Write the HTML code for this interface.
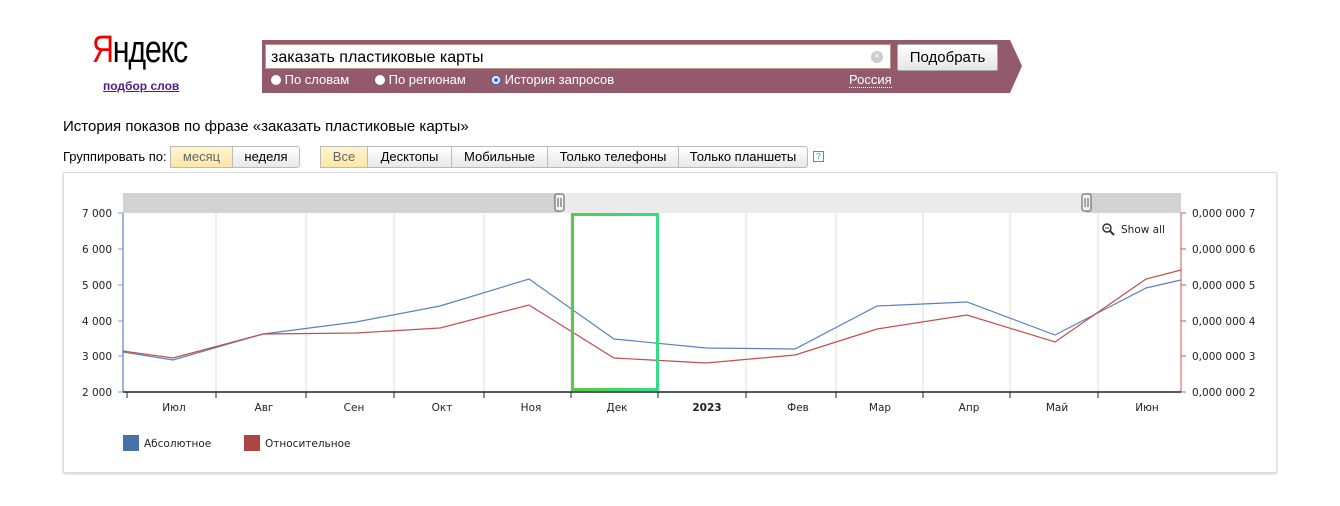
<!DOCTYPE html>
<html><head><meta charset="utf-8"><style>
body{margin:0;width:1340px;height:506px;background:#fff;font-family:"Liberation Sans",sans-serif;position:relative;overflow:hidden;color:#000}
.a{position:absolute}
.btn{position:absolute;top:146px;height:20px;border:1px solid #bbb;background:linear-gradient(#fff,#e8e8e8);font-size:13px;line-height:20px;text-align:center;box-sizing:content-box}
.on{background:linear-gradient(#fff5d0,#fbe7a6);color:#666}
.t{font-family:"DejaVu Sans",sans-serif;font-size:10.5px;fill:#222}
</style></head><body>
<div class="a" style="left:92px;top:28px;font-size:38px;letter-spacing:-1.5px;transform:scaleX(0.8);transform-origin:left;line-height:44px"><span style="color:#e00">Я</span>ндекс</div>
<div class="a" style="left:103px;top:79px;font-size:12px;font-weight:bold;color:#551a8b;text-decoration:underline">подбор слов</div>
<svg class="a" style="left:262px;top:40px" width="762" height="53"><polygon points="0,0 748,0 760,26 748,53 0,53" fill="#935a6e"/></svg>
<div class="a" style="left:265px;top:44px;height:25px;background:#fff;border:1px solid #b98;font-size:16px;line-height:25px;padding-left:5px;box-sizing:border-box;width:626px">заказать пластиковые карты</div>
<div class="a" style="left:871px;top:51px;width:12px;height:12px;border-radius:50%;background:#ccc;color:#fff;font-size:10px;line-height:12px;text-align:center">×</div>
<div class="a" style="left:897px;top:44px;width:99px;height:25px;border:1px solid #aaa;background:linear-gradient(#fff,#e6e6e6);font-size:15px;line-height:25px;text-align:center;border-radius:2px">Подобрать</div>
<div class="a" style="left:271px;top:73px;font-size:13px;color:#fff;line-height:14px">
<span style="display:inline-block;width:10px;height:10px;border-radius:50%;background:#fff;vertical-align:-1px"></span> По словам</div>
<div class="a" style="left:375px;top:73px;font-size:13px;color:#fff;line-height:14px">
<span style="display:inline-block;width:10px;height:10px;border-radius:50%;background:#fff;vertical-align:-1px"></span> По регионам</div>
<div class="a" style="left:491px;top:73px;font-size:13px;color:#fff;line-height:14px">
<span style="display:inline-block;width:8px;height:8px;border-radius:50%;background:#fff;border:1px solid #2a6ee0;box-shadow:inset 0 0 0 2px #fff,inset 0 0 0 4px #2a6ee0;vertical-align:-1px"></span> История запросов</div>
<div class="a" style="left:849px;top:73px;font-size:13px;color:#fff;line-height:14px;border-bottom:1px dotted #fff">Россия</div>
<div class="a" style="left:63px;top:118px;font-size:15px">История показов по фразе «заказать пластиковые карты»</div>
<div class="a" style="left:63px;top:149px;font-size:13px">Группировать по:</div>
<div class="btn on" style="left:170px;width:61px">месяц</div>
<div class="btn" style="left:232px;width:66px;border-radius:0 3px 3px 0">неделя</div>
<div class="btn on" style="left:320px;width:46px">Все</div>
<div class="btn" style="left:367px;width:83px">Десктопы</div>
<div class="btn" style="left:451px;width:95px">Мобильные</div>
<div class="btn" style="left:547px;width:130px">Только телефоны</div>
<div class="btn" style="left:678px;width:128px;border-radius:0 3px 3px 0">Только планшеты</div>
<div class="a" style="left:813px;top:151px;width:9px;height:9px;border:1px solid #4a4;font-size:8px;line-height:9px;text-align:center;color:#4a4">?</div>
<div class="a" style="left:63px;top:172px;width:1212px;height:299px;border:1px solid #ddd;box-shadow:0 1px 2px #ccc"></div>
<svg class="a" style="left:0;top:0" width="1340" height="506">
<rect x="123" y="193" width="437" height="20" fill="#d2d2d2"/>
<rect x="560" y="193" width="526" height="20" fill="#ebebeb"/>
<rect x="1086" y="193" width="95" height="20" fill="#d2d2d2"/>
<rect x="555" y="194" width="9" height="17" rx="2" fill="#f4f4f4" stroke="#555"/><path d="M558 198v9M561 198v9" stroke="#555"/>
<rect x="1082" y="194" width="9" height="17" rx="2" fill="#f4f4f4" stroke="#555"/><path d="M1085 198v9M1088 198v9" stroke="#555"/>
<g stroke="#ddd"><path d="M216 213V392M306 213V392M394 213V392M484 213V392M571 213V392M658 213V392M746 213V392M836 213V392M923 213V392M1010 213V392M1098 213V392"/></g>
<path d="M123 213V392" stroke="#7a9ccc" stroke-width="1.5"/>
<path d="M1181 213V392" stroke="#c55" stroke-width="1"/>
<g stroke="#7a9ccc"><path d="M118 213h5M118 249h5M118 285h5M118 321h5M118 356h5M118 392h5"/></g>
<g stroke="#c55"><path d="M1181 213h5M1181 249h5M1181 285h5M1181 321h5M1181 356h5M1181 392h5"/></g>
<path d="M123 392H1181" stroke="#222" stroke-width="1.5"/>
<g stroke="#222"><path d="M127 392v6M216 392v6M306 392v6M394 392v6M484 392v6M571 392v6M658 392v6M746 392v6M836 392v6M923 392v6M1010 392v6M1098 392v6"/></g>
<g class="t" text-anchor="end"><text x="112" y="217">7 000</text><text x="112" y="253">6 000</text><text x="112" y="289">5 000</text><text x="112" y="325">4 000</text><text x="112" y="360">3 000</text><text x="112" y="396">2 000</text></g>
<g class="t"><text x="1192" y="217">0,000 000 7</text><text x="1192" y="253">0,000 000 6</text><text x="1192" y="289">0,000 000 5</text><text x="1192" y="325">0,000 000 4</text><text x="1192" y="360">0,000 000 3</text><text x="1192" y="396">0,000 000 2</text></g>
<g class="t" text-anchor="middle"><text x="174" y="411">Июл</text><text x="264" y="411">Авг</text><text x="354" y="411">Сен</text><text x="442" y="411">Окт</text><text x="531" y="411">Ноя</text><text x="617" y="411">Дек</text><text x="707" y="411" font-weight="bold">2023</text><text x="798" y="411">Фев</text><text x="880" y="411">Мар</text><text x="969" y="411">Апр</text><text x="1057" y="411">Май</text><text x="1147" y="411">Июн</text></g>
<polyline fill="none" stroke="#5b82bd" stroke-width="1.2" points="123,352 173,360 263,334 356,322 440,306 529,279 614,339 706,348 795,349 877,306 967,302 1055,335 1146,288 1181,280"/>
<polyline fill="none" stroke="#c0504d" stroke-width="1.2" points="123,351 173,358 263,334 356,333 440,328 529,305 614,358 706,363 795,355 877,329 967,315 1055,342 1146,279 1181,270"/>
<defs><linearGradient id="g" x1="0" x2="1"><stop offset="0" stop-color="#5c4"/><stop offset="1" stop-color="#3d8"/></linearGradient></defs>
<rect x="572.5" y="214.5" width="85" height="175" fill="none" stroke="url(#g)" stroke-width="3"/>
<circle cx="1107" cy="228" r="4" fill="none" stroke="#333" stroke-width="1.5"/><path d="M1110 231l4 4" stroke="#333" stroke-width="2"/><path d="M1105 228h4" stroke="#333"/>
<text class="t" x="1121" y="233">Show all</text>
<rect x="123" y="435" width="16" height="16" fill="#4572a7"/><text class="t" x="144" y="447">Абсолютное</text>
<rect x="244" y="435" width="16" height="16" fill="#aa4643"/><text class="t" x="265" y="447">Относительное</text>
</svg>
</body></html>
